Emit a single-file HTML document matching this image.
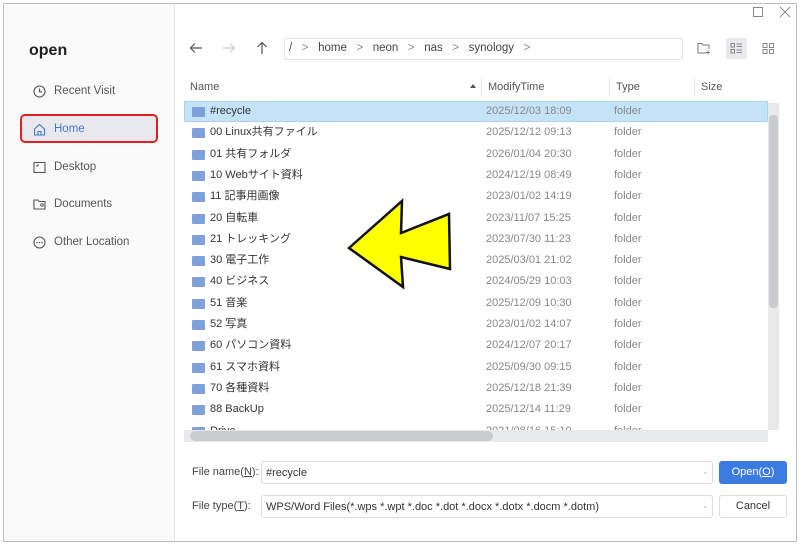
<!DOCTYPE html>
<html><head><meta charset="utf-8"><style>
*{margin:0;padding:0;box-sizing:border-box}
body{width:800px;height:545px;background:#fff;position:relative;overflow:hidden;font-family:"Liberation Sans","Noto Sans CJK JP",sans-serif;color:#333}
.abs{position:absolute}
.win{left:3px;top:3px;width:794px;height:539px;border:1px solid #bdbdbd;background:#fff}
.side{left:4px;top:4px;width:171px;height:537px;background:#fafafa;border-right:1px solid #e6e6e6}
.nav{font-size:11.5px;color:#555;left:54px}
.row{left:184px;width:584px;height:21px;font-size:11px;color:#333;line-height:21px}
.row .n,.row .t,.row .y{position:absolute;top:0;height:21px;line-height:21px;white-space:nowrap;overflow:hidden}
.row .n{left:26px}
.row .t{left:302px;color:#888}
.row .y{left:430px;color:#888}
.row .f{position:absolute;left:8px;top:6px;width:13px;height:10px;background:#7fa0d8;border-radius:1px}
.hdr{font-size:11px;color:#555;top:81px}
.inp{border:1px solid #ddd;border-radius:3px;background:#fff;font-size:11px;color:#333}
</style></head><body>
<div class="abs win"></div>
<div class="abs side"></div>
<div class="abs" style="left:753px;top:7px;width:10px;height:10px;border:1px solid #888"></div>
<svg class="abs" style="left:779px;top:6px" width="12" height="12"><path d="M1 1L11 11M11 1L1 11" stroke="#888" stroke-width="1"/></svg>
<div class="abs" style="left:29px;top:42px;font-size:16px;font-weight:bold;color:#222">open</div>
<svg class="abs" style="left:33px;top:85px" width="13" height="13"><circle cx="6.5" cy="6.5" r="5.5" fill="none" stroke="#555" stroke-width="1.1"/><path d="M6.5 3.5V6.8H9" fill="none" stroke="#555" stroke-width="1.1"/></svg>
<div class="abs nav" style="top:85px">Recent Visit</div>
<div class="abs" style="left:20px;top:114px;width:138px;height:29px;border:2.5px solid #e02020;border-radius:5px;background:#e7e9ee"></div>
<svg class="abs" style="left:33px;top:123px" width="13" height="13"><path d="M1.5 6L6.5 1.5L11.5 6V12H1.5Z M5 12V8.5H8V12" fill="none" stroke="#4a76c9" stroke-width="1.1"/></svg>
<div class="abs nav" style="top:123px;color:#4a76c9">Home</div>
<svg class="abs" style="left:33px;top:161px" width="13" height="13"><rect x="1" y="1.5" width="11" height="10" fill="none" stroke="#555" stroke-width="1.1"/><path d="M4 4H6M4 4V6" stroke="#555"/></svg>
<div class="abs nav" style="top:161px">Desktop</div>
<svg class="abs" style="left:33px;top:198px" width="14" height="13"><path d="M1 2H5L6 3.5H12V11H1Z" fill="none" stroke="#555" stroke-width="1.1"/><circle cx="9" cy="7" r="1.3" fill="none" stroke="#555"/></svg>
<div class="abs nav" style="top:198px">Documents</div>
<svg class="abs" style="left:33px;top:236px" width="13" height="13"><circle cx="6.5" cy="6.5" r="5.5" fill="none" stroke="#555" stroke-width="1.1"/><circle cx="4" cy="6.5" r=".8" fill="#555"/><circle cx="6.5" cy="6.5" r=".8" fill="#555"/><circle cx="9" cy="6.5" r=".8" fill="#555"/></svg>
<div class="abs nav" style="top:236px">Other Location</div>
<svg class="abs" style="left:189px;top:42px" width="14" height="12"><path d="M13 6H1.5M6 1.5L1.5 6L6 10.5" fill="none" stroke="#555" stroke-width="1.2"/></svg>
<svg class="abs" style="left:222px;top:42px" width="14" height="12"><path d="M1 6H12.5M8 1.5L12.5 6L8 10.5" fill="none" stroke="#ccc" stroke-width="1.2"/></svg>
<svg class="abs" style="left:256px;top:41px" width="12" height="14"><path d="M6 13V1.5M1.5 6L6 1.5L10.5 6" fill="none" stroke="#555" stroke-width="1.2"/></svg>
<div class="abs inp" style="left:284px;top:38px;width:399px;height:22px;border-color:#e2e2e2"></div>
<div class="abs" style="left:289px;top:42px;font-size:11.5px;color:#444;white-space:pre">/   <span style="color:#888">&gt;</span>   home   <span style="color:#888">&gt;</span>   neon   <span style="color:#888">&gt;</span>   nas   <span style="color:#888">&gt;</span>   synology   <span style="color:#888">&gt;</span></div>
<svg class="abs" style="left:697px;top:42px" width="14" height="13"><path d="M9 11H1V1.5H5L6 3H12V7" fill="none" stroke="#777" stroke-width="1"/><path d="M11 8.5V12.5M9 10.5H13" stroke="#777"/></svg>
<div class="abs" style="left:726px;top:38px;width:21px;height:21px;background:#e8eaee;border-radius:2px"></div>
<svg class="abs" style="left:730px;top:42px" width="13" height="13"><rect x="1" y="1.5" width="3.5" height="3.5" fill="none" stroke="#888"/><rect x="1" y="7.5" width="3.5" height="3.5" fill="none" stroke="#888"/><path d="M6.5 2H12M6.5 4.5H12M6.5 8H12M6.5 10.5H12" stroke="#888"/></svg>
<svg class="abs" style="left:762px;top:42px" width="13" height="13"><rect x="1" y="1.5" width="4" height="4" fill="none" stroke="#888"/><rect x="7.5" y="1.5" width="4" height="4" fill="none" stroke="#888"/><rect x="1" y="7.5" width="4" height="4" fill="none" stroke="#888"/><rect x="7.5" y="7.5" width="4" height="4" fill="none" stroke="#888"/></svg>
<div class="abs hdr" style="left:190px">Name</div>
<div class="abs" style="left:470px;top:84px;width:0;height:0;border-left:3px solid transparent;border-right:3px solid transparent;border-bottom:4px solid #555"></div>
<div class="abs" style="left:481px;top:78px;width:1px;height:18px;background:#e5e5e5"></div>
<div class="abs hdr" style="left:488px">ModifyTime</div>
<div class="abs" style="left:609px;top:78px;width:1px;height:18px;background:#e5e5e5"></div>
<div class="abs hdr" style="left:616px">Type</div>
<div class="abs" style="left:694px;top:78px;width:1px;height:18px;background:#e5e5e5"></div>
<div class="abs hdr" style="left:701px">Size</div>
<div class="abs" style="left:184px;top:101px;width:584px;height:21px;background:#c5e3f7;border:1px solid #a9d3f2"></div>
<div class="abs row" style="top:101px"><div class="f"></div><div class="n">#recycle</div><div class="t">2025/12/03 18:09</div><div class="y">folder</div></div>
<div class="abs row" style="top:122.3px"><div class="f"></div><div class="n">00 Linux共有ファイル</div><div class="t">2025/12/12 09:13</div><div class="y">folder</div></div>
<div class="abs row" style="top:143.6px"><div class="f"></div><div class="n">01 共有フォルダ</div><div class="t">2026/01/04 20:30</div><div class="y">folder</div></div>
<div class="abs row" style="top:164.9px"><div class="f"></div><div class="n">10 Webサイト資料</div><div class="t">2024/12/19 08:49</div><div class="y">folder</div></div>
<div class="abs row" style="top:186.2px"><div class="f"></div><div class="n">11 記事用画像</div><div class="t">2023/01/02 14:19</div><div class="y">folder</div></div>
<div class="abs row" style="top:207.5px"><div class="f"></div><div class="n">20 自転車</div><div class="t">2023/11/07 15:25</div><div class="y">folder</div></div>
<div class="abs row" style="top:228.8px"><div class="f"></div><div class="n">21 トレッキング</div><div class="t">2023/07/30 11:23</div><div class="y">folder</div></div>
<div class="abs row" style="top:250.1px"><div class="f"></div><div class="n">30 電子工作</div><div class="t">2025/03/01 21:02</div><div class="y">folder</div></div>
<div class="abs row" style="top:271.4px"><div class="f"></div><div class="n">40 ビジネス</div><div class="t">2024/05/29 10:03</div><div class="y">folder</div></div>
<div class="abs row" style="top:292.7px"><div class="f"></div><div class="n">51 音楽</div><div class="t">2025/12/09 10:30</div><div class="y">folder</div></div>
<div class="abs row" style="top:314px"><div class="f"></div><div class="n">52 写真</div><div class="t">2023/01/02 14:07</div><div class="y">folder</div></div>
<div class="abs row" style="top:335.3px"><div class="f"></div><div class="n">60 パソコン資料</div><div class="t">2024/12/07 20:17</div><div class="y">folder</div></div>
<div class="abs row" style="top:356.6px"><div class="f"></div><div class="n">61 スマホ資料</div><div class="t">2025/09/30 09:15</div><div class="y">folder</div></div>
<div class="abs row" style="top:377.9px"><div class="f"></div><div class="n">70 各種資料</div><div class="t">2025/12/18 21:39</div><div class="y">folder</div></div>
<div class="abs row" style="top:399.2px"><div class="f"></div><div class="n">88 BackUp</div><div class="t">2025/12/14 11:29</div><div class="y">folder</div></div>
<div class="abs row" style="top:420.5px;height:10px;overflow:hidden"><div class="f"></div><div class="n">Drive</div><div class="t">2021/08/16 15:10</div><div class="y">folder</div></div>
<div class="abs" style="left:768px;top:103px;width:11px;height:327px;background:#e8e9eb"></div>
<div class="abs" style="left:769px;top:115px;width:9px;height:193px;background:#c9cbce;border-radius:4px"></div>
<div class="abs" style="left:184px;top:430px;width:584px;height:12px;background:#e8e9eb"></div>
<div class="abs" style="left:190px;top:431px;width:303px;height:10px;background:#c9cbce;border-radius:5px"></div>
<div class="abs" style="left:192px;top:466px;font-size:11px;color:#444">File name(<u>N</u>):</div>
<div class="abs inp" style="left:261px;top:461px;width:452px;height:23px;padding:5px 4px">#recycle</div>
<div class="abs" style="left:702px;top:467px;font-size:8px;color:#bbb">⌄</div>
<div class="abs" style="left:719px;top:461px;width:68px;height:23px;background:#3b7be0;border-radius:3px;color:#fff;font-size:11px;text-align:center;line-height:23px">Open(<u>O</u>)</div>
<div class="abs" style="left:192px;top:500px;font-size:11px;color:#444">File type(<u>T</u>):</div>
<div class="abs inp" style="left:261px;top:495px;width:452px;height:23px;padding:5px 4px;white-space:nowrap">WPS/Word Files(*.wps *.wpt *.doc *.dot *.docx *.dotx *.docm *.dotm)</div>
<div class="abs" style="left:702px;top:501px;font-size:8px;color:#bbb">⌄</div>
<div class="abs inp" style="left:719px;top:495px;width:68px;height:23px;text-align:center;line-height:21px">Cancel</div>
<svg class="abs" style="left:0;top:0" width="800" height="545"><polygon points="349,248 402,201 401,233 449,214 450,269 401,257 403,287" fill="#ffff00" stroke="#111" stroke-width="2.5" stroke-linejoin="miter"/></svg>
</body></html>
